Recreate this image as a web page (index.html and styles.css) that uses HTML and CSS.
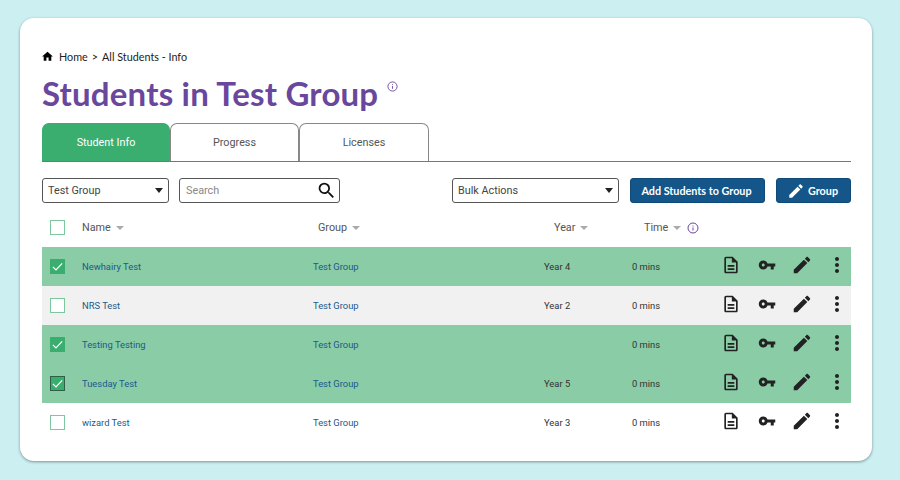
FILE: index.html
```html
<!DOCTYPE html>
<html lang="en">
<head>
    <meta charset="UTF-8">
    <title>Students in Test Group</title>
    <link rel="stylesheet" href="styles.css">
</head>
<body>
    <main class="card">
        <nav class="crumbs">
            <svg class="home" viewBox="0 0 24 24"><path d="M10 20v-6h4v6h5v-8h3L12 3 2 12h3v8z"/></svg>
            <span class="home-label">Home</span><span>&gt;</span><span>All Students - Info</span>
        </nav>
        <div class="title-row">
            <h1>Students in Test Group</h1>
            <svg class="info title-info" viewBox="0 0 24 24"><circle cx="12" cy="12" r="10"/><path d="M12 11v6M12 7v2"/></svg>
        </div>
        <div class="tabs">
            <div class="tab active">Student Info</div>
            <div class="tab">Progress</div>
            <div class="tab last">Licenses</div>
        </div>
        <div class="controls">
            <div class="select group-select">Test Group<span class="caret"></span></div>
            <div class="search">
                <span>Search</span>
                <svg viewBox="0 0 24 24"><path d="M15.5 14h-.79l-.28-.27A6.47 6.47 0 0 0 16 9.5 6.5 6.5 0 1 0 9.5 16c1.61 0 3.09-.59 4.23-1.57l.27.28v.79l5 4.99L20.49 19l-4.99-5zm-6 0C7.01 14 5 11.99 5 9.5S7.01 5 9.5 5 14 7.01 14 9.5 11.99 14 9.5 14z"/></svg>
            </div>
            <div class="select bulk-select">Bulk Actions<span class="caret"></span></div>
            <button class="btn add-btn">Add Students to Group</button>
            <button class="btn edit-btn">
                <svg viewBox="0 0 24 24"><path d="M3 17.25V21h3.75L17.81 9.94l-3.75-3.75L3 17.25zM20.71 7.04c.39-.39.39-1.02 0-1.41l-2.34-2.34c-.39-.39-1.02-.39-1.41 0l-1.83 1.83 3.75 3.75 1.83-1.83z"/></svg>
                Group
            </button>
        </div>
        <div class="table">
            <div class="row head">
                <div><span class="check"></span></div>
                <div>Name<span class="sort"></span></div>
                <div class="head-group">Group<span class="sort"></span></div>
                <div class="head-year">Year<span class="sort"></span></div>
                <div class="head-time">Time<span class="sort"></span>
                    <svg class="info time-info" viewBox="0 0 24 24"><circle cx="12" cy="12" r="10"/><path d="M12 11v6M12 7v2"/></svg>
                </div>
            </div>
            <div class="row picked" id="r1"></div>
            <div class="row grey" id="r2"></div>
            <div class="row picked" id="r3"></div>
            <div class="row picked dark" id="r4"></div>
            <div class="row" id="r5"></div>
        </div>
    </main>
    <script>
        const students = [
            ['Newhairy Test', 'Year 4', '0 mins'],
            ['NRS Test', 'Year 2', '0 mins'],
            ['Testing Testing', '', '0 mins'],
            ['Tuesday Test', 'Year 5', '0 mins'],
            ['wizard Test', 'Year 3', '0 mins']
        ];
        const tick = '<svg viewBox="0 0 16 16"><path d="M3 8.4l3.4 3.2 6.6-7"/></svg>';
        const icons = `
            <div class="actions">
                <svg class="i-doc" viewBox="0 0 24 24"><path d="M8 16h8v2H8zm0-4h8v2H8zm6-10H6c-1.1 0-2 .9-2 2v16c0 1.1.89 2 1.99 2H18c1.1 0 2-.9 2-2V8l-6-6zm4 18H6V4h7v5h5v11z"/></svg>
                <svg class="i-key" viewBox="0 0 24 24"><path d="M12.65 10C11.83 7.67 9.61 6 7 6c-3.31 0-6 2.69-6 6s2.69 6 6 6c2.61 0 4.83-1.67 5.65-4H17v4h4v-4h2v-4H12.65zM7 14c-1.1 0-2-.9-2-2s.9-2 2-2 2 .9 2 2-.9 2-2 2z"/></svg>
                <svg class="i-pen" viewBox="0 0 24 24"><path d="M3 17.25V21h3.75L17.81 9.94l-3.75-3.75L3 17.25zM20.71 7.04c.39-.39.39-1.02 0-1.41l-2.34-2.34c-.39-.39-1.02-.39-1.41 0l-1.83 1.83 3.75 3.75 1.83-1.83z"/></svg>
                <svg class="i-more" viewBox="0 0 24 24"><path d="M12 8c1.1 0 2-.9 2-2s-.9-2-2-2-2 .9-2 2 .9 2 2 2zm0 2c-1.1 0-2 .9-2 2s.9 2 2 2 2-.9 2-2-.9-2-2-2zm0 6c-1.1 0-2 .9-2 2s.9 2 2 2 2-.9 2-2-.9-2-2-2z"/></svg>
            </div>`;
        students.forEach((s, i) => {
            const row = document.getElementById('r' + (i + 1));
            const on = row.classList.contains('picked');
            row.innerHTML = `
                <div><span class="check ${on ? 'on' : ''}">${on ? tick : ''}</span></div>
                <div class="link">${s[0]}</div>
                <div class="link">Test Group</div>
                <div>${s[1]}</div>
                <div>${s[2]}</div>` + icons;
        });
    </script>
</body>
</html>
```

FILE: styles.css
```css
* {
    box-sizing: border-box;
}
body {
    margin: 0;
    height: 480px;
    padding: 18px 28px 19px 20px;
    background-color: #ccf0f2;
    font-family: 'Roboto', sans-serif;
    color: #333;
    overflow: hidden;
}
.card {
    height: 443px;
    padding: 30px 21px 0 22px;
    background-color: #fff;
    border-radius: 14px;
    box-shadow: 0 1px 3px rgba(0, 0, 0, 0.4);
}
.crumbs {
    display: flex;
    align-items: center;
    gap: 4px;
    height: 16px;
    font-family: 'Lato', sans-serif;
    font-size: 10.8px;
    color: #222;
}
.home {
    width: 13px;
    height: 13px;
    margin-left: -1px;
}
.home-label {
    margin-left: 1px;
}
.title-row {
    display: flex;
    align-items: flex-start;
    margin-top: 8px;
    height: 51px;
}
h1 {
    margin: 0;
    font-family: 'Lato', sans-serif;
    font-size: 33px;
    line-height: 42px;
    font-weight: 700;
    letter-spacing: 0.2px;
    color: #68479d;
}
.info {
    fill: none;
    stroke: #68479d;
    stroke-width: 2;
}
.title-info {
    width: 11px;
    height: 11px;
    margin: 9px 0 0 9px;
}
.tabs {
    display: flex;
    height: 39px;
    border-bottom: 1px solid #777;
}
.tab {
    width: 129px;
    display: flex;
    justify-content: center;
    align-items: center;
    padding-bottom: 1px;
    font-size: 10.8px;
    color: #555;
    border: 1px solid #888;
    border-bottom: none;
    border-radius: 7px 7px 0 0;
}
.tab.active {
    width: 128px;
    background-color: #3aae6f;
    border-color: #3aae6f;
    color: #fff;
}
.tab.last {
    width: 130px;
}
.controls {
    display: flex;
    align-items: stretch;
    height: 25px;
    margin-top: 16px;
    font-size: 10.8px;
}
.select, .search {
    display: flex;
    align-items: center;
    padding: 0 5px;
    border: 1px solid #555;
    border-radius: 3px;
    color: #444;
    justify-content: space-between;
}
.group-select {
    width: 127px;
}
.search {
    width: 161px;
    margin-left: 10px;
    padding: 0 2px 0 6px;
    color: #888;
}
.search svg {
    width: 21px;
    height: 21px;
    fill: #111;
}
.bulk-select {
    width: 167px;
    margin-left: 112px;
}
.caret {
    width: 0;
    height: 0;
    border-left: 4px solid transparent;
    border-right: 4px solid transparent;
    border-top: 5px solid #222;
}
.btn {
    display: flex;
    align-items: center;
    justify-content: center;
    gap: 3px;
    padding: 0 2px 0 0;
    font-family: 'Lato', sans-serif;
    font-size: 10.8px;
    font-weight: 700;
    color: #fff;
    background-color: #14568a;
    border: 1px solid #0f4a78;
    border-radius: 3px;
}
.btn svg {
    width: 18px;
    height: 18px;
    fill: #fff;
}
.add-btn {
    width: 135px;
    margin-left: 11px;
}
.edit-btn {
    width: 75px;
    margin-left: 11px;
}
.table {
    margin-top: 5px;
}
.row {
    display: grid;
    grid-template-columns: 40px 231px 231px 88px 91px 1fr;
    align-items: center;
    height: 39px;
    font-size: 9.4px;
    color: #333;
}
.row.head {
    font-size: 10.8px;
    color: #555;
}
.head-group {
    padding-left: 5px;
}
.head-year {
    padding-left: 10px;
}
.head-time {
    padding-left: 12px;
    display: flex;
    align-items: center;
}
.sort {
    display: inline-block;
    width: 0;
    height: 0;
    margin-left: 5px;
    vertical-align: middle;
    border-left: 4px solid transparent;
    border-right: 4px solid transparent;
    border-top: 4px solid #aaa;
}
.time-info {
    width: 12px;
    height: 12px;
    margin-left: 6px;
}
.row.picked {
    background-color: #89cca6;
}
.row.grey {
    background-color: #f1f1f1;
}
.link {
    color: #1c5a8a;
}
.check {
    display: flex;
    align-items: center;
    justify-content: center;
    width: 15px;
    height: 15px;
    margin-left: 8px;
    background-color: #fff;
    border: 1px solid #7cc79d;
}
.check.on {
    background-color: #3aae6f;
    border-color: #3aae6f;
}
.dark .check.on {
    border-color: #2f5f48;
}
.check svg {
    width: 15px;
    height: 15px;
    flex: none;
    fill: none;
    stroke: #fff;
    stroke-width: 1.3;
}
.actions {
    display: flex;
    align-items: center;
    padding-bottom: 3px;
}
.actions svg {
    fill: #222;
    flex: none;
}
.i-doc {
    width: 20px;
    height: 20px;
    margin-left: -2px;
}
.i-key {
    width: 18px;
    height: 18px;
    margin-left: 17px;
}
.i-pen {
    width: 22px;
    height: 22px;
    margin-left: 15px;
}
.i-more {
    width: 24px;
    height: 24px;
    margin-left: 12px;
}
```
